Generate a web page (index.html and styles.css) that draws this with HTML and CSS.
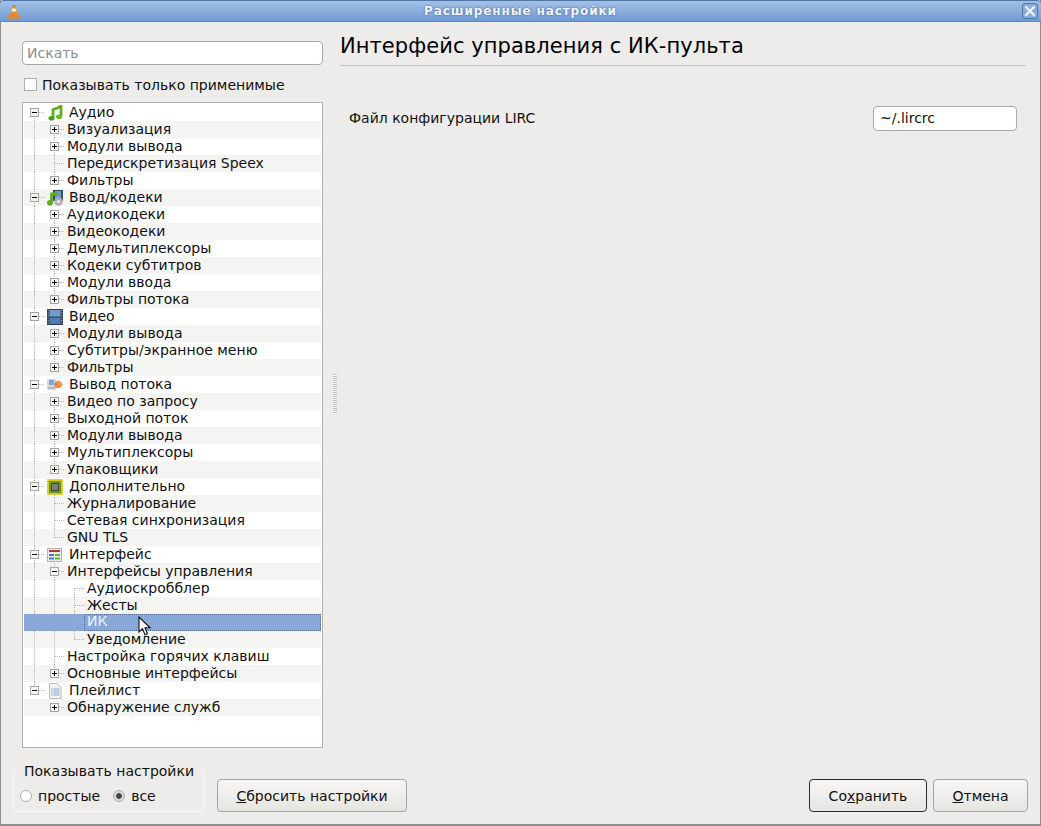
FILE: index.html
```html
<!DOCTYPE html>
<html lang="ru">
<head>
<meta charset="utf-8">
<title>Расширенные настройки</title>
<link rel="stylesheet" href="styles.css">
</head>
<body>
<div class="window">
  <header class="titlebar">
    <svg class="cone" width="16" height="16" viewBox="0 0 16 16"><path d="M1 14.500 4 11h8l3 3.500-1 1H2z" fill="#e8872a"/><path d="M6.800 2h2.400l2.800 10.500H4z" fill="#f08a1c"/><path d="M6.200 5.500h3.600l.8 3H5.400z" fill="#f4f0ea"/><path d="M7 2h2l.3 1H6.700z" fill="#d9761a"/></svg>
    <div class="title">Расширенные настройки</div>
    <div class="close"><svg width="12" height="12" viewBox="0 0 12 12"><path d="M2 2l8 8M10 2l-8 8" stroke="#f4f7fb" stroke-width="2" stroke-linecap="round"/></svg></div>
  </header>
  <main class="content">
    <aside class="left">
      <div class="search">Искать</div>
      <label class="only"><span class="check"></span>Показывать только применимые</label>
      <div class="tree">
        <div class="row"><span class="c d"><i class="bx minus"></i></span><svg class="ic" width="16" height="16" viewBox="0 0 16 16"><path d="M6 4.500Q10 3.500 14 1V11" fill="none" stroke="#5fae22" stroke-width="2.800"/><path d="M6 3.500V13" stroke="#5fae22" stroke-width="2.800"/><ellipse cx="4.500" cy="13.300" rx="3" ry="2.300" fill="#4f9e1c"/><ellipse cx="12" cy="11.800" rx="3" ry="2.300" fill="#69bb2a"/></svg><span class="top">Аудио</span></div>
        <div class="row"><span class="c v"></span><span class="c d"><i class="bx plus"></i></span><span class="t">Визуализация</span></div>
        <div class="row"><span class="c v"></span><span class="c v"><i class="bx plus"></i></span><span class="t">Модули вывода</span></div>
        <div class="row"><span class="c v"></span><span class="c v h"></span><span class="t">Передискретизация Speex</span></div>
        <div class="row"><span class="c v"></span><span class="c u"><i class="bx plus"></i></span><span class="t">Фильтры</span></div>
        <div class="row"><span class="c v"><i class="bx minus"></i></span><svg class="ic" width="16" height="16" viewBox="0 0 16 16"><rect x="6" y="0" width="10" height="11" fill="#33506f"/><rect x="8" y="1" width="6" height="9" fill="#6f96c4"/><path d="M4.500 11V4h6" fill="none" stroke="#5fae22" stroke-width="2.800"/><ellipse cx="3" cy="12.800" rx="3" ry="2.800" fill="#5fae22"/><circle cx="11.500" cy="11.500" r="4.300" fill="#aeb2ae"/><circle cx="11.500" cy="11.500" r="1.500" fill="#ededed"/></svg><span class="top">Ввод/кодеки</span></div>
        <div class="row"><span class="c v"></span><span class="c d"><i class="bx plus"></i></span><span class="t">Аудиокодеки</span></div>
        <div class="row"><span class="c v"></span><span class="c v"><i class="bx plus"></i></span><span class="t">Видеокодеки</span></div>
        <div class="row"><span class="c v"></span><span class="c v"><i class="bx plus"></i></span><span class="t">Демультиплексоры</span></div>
        <div class="row"><span class="c v"></span><span class="c v"><i class="bx plus"></i></span><span class="t">Кодеки субтитров</span></div>
        <div class="row"><span class="c v"></span><span class="c v"><i class="bx plus"></i></span><span class="t">Модули ввода</span></div>
        <div class="row"><span class="c v"></span><span class="c u"><i class="bx plus"></i></span><span class="t">Фильтры потока</span></div>
        <div class="row"><span class="c v"><i class="bx minus"></i></span><svg class="ic" width="16" height="16" viewBox="0 0 16 16"><rect x="0" y="0" width="16" height="16" fill="#2e3c4c"/><rect x="2.500" y="1" width="11" height="6.500" fill="#6f9bd2"/><rect x="2.500" y="8.500" width="11" height="6.500" fill="#4d7bb6"/><path d="M1.200 1v14M14.800 1v14" stroke="#c4ccd6" stroke-dasharray="1 1.500"/></svg><span class="top">Видео</span></div>
        <div class="row"><span class="c v"></span><span class="c d"><i class="bx plus"></i></span><span class="t">Модули вывода</span></div>
        <div class="row"><span class="c v"></span><span class="c v"><i class="bx plus"></i></span><span class="t">Субтитры/экранное меню</span></div>
        <div class="row"><span class="c v"></span><span class="c u"><i class="bx plus"></i></span><span class="t">Фильтры</span></div>
        <div class="row"><span class="c v"><i class="bx minus"></i></span><svg class="ic" width="16" height="16" viewBox="0 0 16 16"><rect x="0" y="2" width="9" height="11" fill="#d8dadc"/><rect x="2" y="3" width="5" height="5" fill="#7ea4d4"/><rect x="1" y="10" width="7" height="1.500" fill="#a8acb0"/><circle cx="11" cy="7.500" r="3.500" fill="#e0792a"/><path d="M12 3.500l4 4-4 4z" fill="#f09232"/><path d="M9 5l4 4M9 8l3 3M10 4l4 4" stroke="#f6c48c" stroke-width=".7"/></svg><span class="top">Вывод потока</span></div>
        <div class="row"><span class="c v"></span><span class="c d"><i class="bx plus"></i></span><span class="t">Видео по запросу</span></div>
        <div class="row"><span class="c v"></span><span class="c v"><i class="bx plus"></i></span><span class="t">Выходной поток</span></div>
        <div class="row"><span class="c v"></span><span class="c v"><i class="bx plus"></i></span><span class="t">Модули вывода</span></div>
        <div class="row"><span class="c v"></span><span class="c v"><i class="bx plus"></i></span><span class="t">Мультиплексоры</span></div>
        <div class="row"><span class="c v"></span><span class="c u"><i class="bx plus"></i></span><span class="t">Упаковщики</span></div>
        <div class="row"><span class="c v"><i class="bx minus"></i></span><svg class="ic" width="16" height="16" viewBox="0 0 16 16"><rect x="0" y="0" width="16" height="16" fill="#d9c81e"/><rect x="0" y="0" width="16" height="16" fill="none" stroke="#f2ea80" stroke-dasharray="1 1"/><rect x="2" y="2" width="12" height="12" fill="#5f9a24"/><rect x="4.500" y="4.500" width="7" height="7" fill="#7a7e74" stroke="#3f4a34"/></svg><span class="top">Дополнительно</span></div>
        <div class="row"><span class="c v"></span><span class="c v h"></span><span class="t">Журналирование</span></div>
        <div class="row"><span class="c v"></span><span class="c v h"></span><span class="t">Сетевая синхронизация</span></div>
        <div class="row"><span class="c v"></span><span class="c u h"></span><span class="t">GNU TLS</span></div>
        <div class="row"><span class="c v"><i class="bx minus"></i></span><svg class="ic" width="16" height="16" viewBox="0 0 16 16"><rect x=".5" y="1.500" width="14" height="13" fill="#eceae6" stroke="#b4b4ae"/><rect x="2" y="3" width="11" height="2" fill="#a83a30"/><rect x="2" y="7" width="5" height="2" fill="#4a7ec0"/><rect x="8" y="7" width="5" height="2" fill="#6ab030"/><rect x="2" y="10.500" width="5" height="2" fill="#4a7ec0"/><rect x="8" y="10.500" width="5" height="2" fill="#6ab030"/></svg><span class="top">Интерфейс</span></div>
        <div class="row"><span class="c v"></span><span class="c v"><i class="bx minus"></i></span><span class="t">Интерфейсы управления</span></div>
        <div class="row"><span class="c v"></span><span class="c v"></span><span class="c d h"></span><span class="t">Аудиоскробблер</span></div>
        <div class="row"><span class="c v"></span><span class="c v"></span><span class="c v h"></span><span class="t">Жесты</span></div>
        <div class="row sel"><span class="c"></span><span class="c"></span><span class="c v h"></span><span class="t">ИК</span></div>
        <div class="row"><span class="c v"></span><span class="c v"></span><span class="c u h"></span><span class="t">Уведомление</span></div>
        <div class="row"><span class="c v"></span><span class="c v h"></span><span class="t">Настройка горячих клавиш</span></div>
        <div class="row"><span class="c v"></span><span class="c u"><i class="bx plus"></i></span><span class="t">Основные интерфейсы</span></div>
        <div class="row"><span class="c u"><i class="bx minus"></i></span><svg class="ic" width="16" height="16" viewBox="0 0 16 16"><path d="M2.500.5h8l3.500 4v11H2.500z" fill="#f4f3f0" stroke="#bcbcb8"/><path d="M4.500 6h1M4.500 8h1M4.500 10h1M4.500 12h1" stroke="#4a7ec0" stroke-width="1.200"/><path d="M6.500 6h6M6.500 8h6M6.500 10h6M6.500 12h6" stroke="#7ea8dc" stroke-width="1.200"/></svg><span class="top">Плейлист</span></div>
        <div class="row"><span class="c"></span><span class="c"><i class="bx plus"></i></span><span class="t">Обнаружение служб</span></div>
        <svg class="cursor" width="14" height="21" viewBox="0 0 14 21"><path d="M1 1v15l3.500-3.200 2.500 6 2.500-1-2.500-6h5z" fill="#fff" stroke="#111" stroke-width="1.100"/></svg>
      </div>
    </aside>
    <div class="splitter"><div class="grip"></div></div>
    <section class="right">
      <h1 class="heading">Интерфейс управления с ИК-пульта</h1>
      <div class="field">
        <span class="flabel">Файл конфигурации LIRC</span>
        <div class="input">~/.lircrc</div>
      </div>
    </section>
  </main>
  <footer class="bottom">
    <fieldset class="mode">
      <legend>Показывать настройки</legend>
      <span class="radio"></span><span class="rlabel">простые</span>
      <span class="radio on"></span><span>все</span>
    </fieldset>
    <button class="btn reset"><u>С</u>бросить настройки</button>
    <div class="spacer"></div>
    <button class="btn save">Со<u>х</u>ранить</button>
    <button class="btn cancel"><u>О</u>тмена</button>
  </footer>
</div>
</body>
</html>
```
FILE: styles.css
```css
* { box-sizing: border-box; }
html, body { margin: 0; padding: 0; }
body {
  width: 1041px;
  height: 826px;
  overflow: hidden;
  font-family: "DejaVu Sans", sans-serif;
  font-size: 14px;
  color: #111;
  background: #edecea;
}
.window {
  width: 1041px;
  height: 826px;
  display: flex;
  flex-direction: column;
  border-left: 1px solid #8e8e8c;
  border-right: 1px solid #8e8e8c;
  border-bottom: 2px solid #8e8e8c;
}
.titlebar {
  height: 22px;
  margin: 0 -1px;
  display: flex;
  align-items: center;
  padding: 0 3px 0 6px;
  background: linear-gradient(#a3c1e6, #729ad0);
  border-top: 1px solid #4f75a8;
  border-bottom: 1px solid #5f86bb;
  border-radius: 4px 4px 0 0;
}
.title {
  flex: 1;
  padding-right: 3px;
  text-align: center;
  font-size: 12px;
  font-weight: bold;
  letter-spacing: .9px;
  color: #f2f6fc;
  text-shadow: 0 0 2px #2c5184;
}
.close {
  width: 16px;
  height: 16px;
  display: flex;
  align-items: center;
  justify-content: center;
  border: 1px solid #4f75a8;
  border-radius: 3px;
  background: #8aaddc;
}
.content { flex: 1; display: flex; min-height: 0; }
.left { width: 323px; padding: 19px 0 0 21px; display: flex; flex-direction: column; }
.search {
  width: 301px;
  height: 24px;
  padding: 3px 4px;
  line-height: 16px;
  color: #8e8e8e;
  background: #fff;
  border: 1px solid #a9a9a5;
  border-radius: 4px;
  flex: none;
}
.only {
  height: 15px;
  margin: 12px 0 10px 2px;
  display: flex;
  align-items: center;
  flex: none;
}
.check {
  width: 13px;
  height: 13px;
  margin-right: 5px;
  background: #fff;
  border: 1px solid #b0b0ac;
}
.tree {
  position: relative;
  width: 301px;
  height: 646px;
  flex: none;
  padding: 1px;
  background: #fff;
  border: 1px solid #b0b0ac;
}
.row {
  height: 17px;
  display: flex;
  align-items: center;
  white-space: nowrap;
}
.row:nth-child(even) { background: #f4f4f3; }
.c {
  position: relative;
  width: 20px;
  height: 17px;
  flex: none;
}
.c::before, .c::after { content: ""; position: absolute; }
.v::before, .u::before, .d::before {
  left: 10px;
  width: 1px;
  background: repeating-linear-gradient(#b6b6b6 0 1px, transparent 1px 2px);
}
.v::before { top: 0; bottom: 0; }
.u::before { top: 0; height: 9px; }
.d::before { top: 8px; bottom: 0; }
.h::after, .c:has(.bx)::after {
  left: 11px;
  top: 8px;
  width: 9px;
  height: 1px;
  background: repeating-linear-gradient(90deg, #b6b6b6 0 1px, transparent 1px 2px);
}
.bx {
  position: absolute;
  left: 6px;
  top: 4px;
  z-index: 1;
  width: 9px;
  height: 9px;
  background-color: #f4f4f2;
  border: 1px solid #a4a4a0;
  background-repeat: no-repeat;
}
.minus { background-image: linear-gradient(#000, #000); background-size: 5px 1px; background-position: center; }
.plus {
  background-image: linear-gradient(#000, #000), linear-gradient(#000, #000);
  background-size: 5px 1px, 1px 5px;
  background-position: center, center;
}
.ic { flex: none; margin-left: 3px; }
.top { margin: 0 0 2px 6px; }
.t { margin: 0 0 2px 3px; }
.sel { background: #88a9d8 !important; }
.sel .c::before, .sel .c::after {
  opacity: .6;
}
.sel .t {
  flex: 1;
  margin: 0;
  padding-left: 3px;
  height: 17px;
  line-height: 15px;
  color: #edf3fb;
  outline: 1px dotted #4c6a96;
  outline-offset: -1px;
}
.cursor { position: absolute; left: 115px; top: 513px; }
.splitter {
  width: 16px;
  display: flex;
  align-items: center;
  justify-content: center;
  padding-bottom: 2px;
}
.grip {
  width: 4px;
  height: 40px;
  margin-left: 6px;
  background: repeating-linear-gradient(#bcbcb8 0 1px, #f8f8f6 1px 2px);
}
.right { flex: 1; padding: 0 14px 0 0; }
.heading {
  height: 44px;
  margin: 0;
  padding-top: 12px;
  font-size: 21px;
  line-height: 25px;
  letter-spacing: .06px;
  font-weight: normal;
  color: #000;
  border-bottom: 1px solid #c4c3bf;
}
.field {
  display: flex;
  align-items: center;
  justify-content: space-between;
  margin-top: 40px;
  padding: 0 9px;
}
.flabel { margin-bottom: 2px; }
.input {
  width: 144px;
  height: 25px;
  padding: 3px 6px;
  line-height: 17px;
  background: #fff;
  border: 1px solid #a9a9a5;
  border-radius: 4px;
}
.bottom {
  height: 56px;
  display: flex;
  align-items: flex-start;
  flex: none;
  padding: 0 12px;
}
.mode {
  width: 191px;
  height: 49px;
  margin: -5px 13px 0 0;
  padding: 2px 0 0 6px;
  display: flex;
  align-items: center;
  border: 1px solid #f7f7f5;
  min-inline-size: 0;
}
.mode legend { padding: 0 4px; margin-left: 0; }
.radio {
  width: 12px;
  height: 12px;
  margin-right: 6px;
  border: 1px solid #b0aca6;
  border-radius: 50%;
  background: #fff;
}
.radio.on { background: radial-gradient(circle, #444 0 2.500px, #dcdbd8 3.200px); }
.rlabel { margin-right: 13px; }
.btn {
  height: 33px;
  margin-top: 11px;
  padding: 0;
  font: inherit;
  color: #111;
  border: 1px solid #a4a4a0;
  border-radius: 4px;
  background: linear-gradient(#f7f6f5, #e6e5e2);
}
.reset { width: 190px; }
.spacer { flex: 1; }
.save { width: 118px; margin-right: 6px; border-color: #2a2a2a; }
.cancel { width: 95px; }
```
